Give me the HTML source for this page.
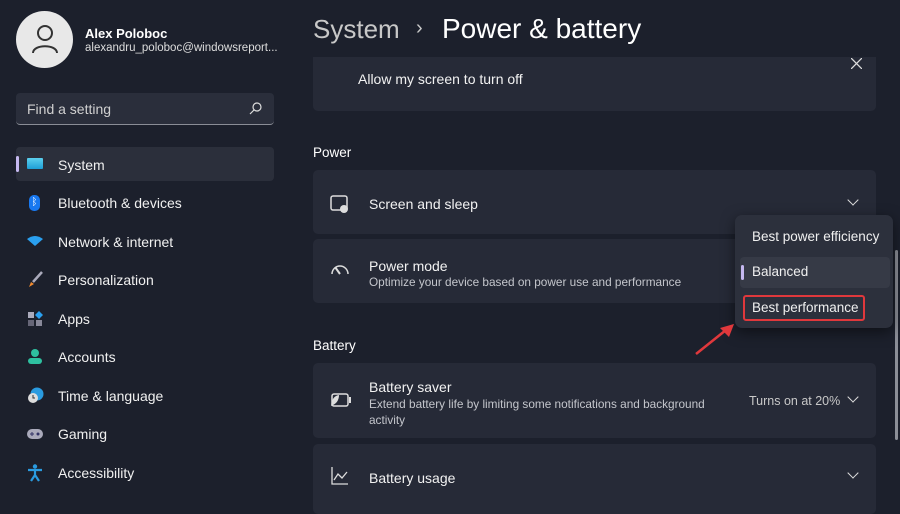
<!DOCTYPE html>
<html><head><meta charset="utf-8"><style>
*{margin:0;padding:0;box-sizing:border-box}
body{width:900px;height:500px;overflow:hidden;background:#1c202c;font-family:"Liberation Sans",sans-serif;color:#fff;position:relative}
.a{position:absolute}
.nav{position:absolute;left:58px;font-size:14px;color:#f0f0f0}
.ic{position:absolute;left:27px}
.card{position:absolute;left:313px;width:563px;background:#262a37;border-radius:5px}
.t{font-size:14px;color:#f2f2f2;position:absolute}
.s{font-size:11.8px;color:#c4c6cc;position:absolute}
.chev{position:absolute;width:8px;height:8px;border-right:1.3px solid #ddd;border-bottom:1.3px solid #ddd;transform:rotate(45deg)}
</style></head><body>
<div class="a" style="left:16px;top:11px;width:57px;height:57px;border-radius:50%;background:#e8e8e8"></div>
<svg class="a" style="left:30px;top:23px" width="30" height="32" viewBox="0 0 30 32"><circle cx="15" cy="10" r="7" fill="none" stroke="#333" stroke-width="2"/><path d="M3 30 C3 21 27 21 27 30" fill="none" stroke="#333" stroke-width="2"/></svg>
<div class="a" style="left:85px;top:26px;font-size:13px;font-weight:bold">Alex Poloboc</div>
<div class="a" style="left:85px;top:42px;font-size:11.5px;color:#ddd">alexandru_poloboc@windowsreport...</div>
<div class="a" style="left:16px;top:93px;width:258px;height:32px;background:#2a2e3b;border-radius:4px;border-bottom:1px solid #8a8d96"></div>
<div class="a" style="left:27px;top:101px;font-size:14px;color:#d0d0d0">Find a setting</div>
<svg class="a" style="left:249px;top:102px" width="13" height="13" viewBox="0 0 13 13"><circle cx="8" cy="5" r="4" fill="none" stroke="#ddd" stroke-width="1.2"/><path d="M5 8 L1 12" stroke="#ddd" stroke-width="1.2"/></svg>
<div class="a" style="left:16px;top:147px;width:258px;height:34px;background:#2b2f3b;border-radius:4px"></div>
<div class="a" style="left:16px;top:156px;width:3px;height:16px;background:#c5b8f0;border-radius:2px"></div>
<div class="ic" style="top:158px;width:16px;height:11px;background:linear-gradient(#5cd0ee,#1e9fd6);border-radius:1px"></div>
<div class="nav" style="top:157px">System</div>
<div class="ic" style="top:195px;left:29px;width:11px;height:16px;background:#1878f0;border-radius:5px;font-size:10px;text-align:center;line-height:16px">ᛒ</div>
<div class="nav" style="top:195px">Bluetooth &amp; devices</div>
<svg class="ic" style="top:236px" width="16" height="10" viewBox="0 0 16 10"><path d="M0 3 Q8 -3 16 3 L8 10Z" fill="#2aa0f0"/></svg>
<div class="nav" style="top:234px">Network &amp; internet</div>
<svg class="ic" style="top:271px" width="16" height="17" viewBox="0 0 16 17"><path d="M15 1 L6 11" stroke="#aab" stroke-width="2.5"/><path d="M2 16 L4 11 L7 13Z" fill="#f08a30"/></svg>
<div class="nav" style="top:272px">Personalization</div>
<svg class="ic" style="top:311px" width="16" height="16" viewBox="0 0 16 16"><rect x="1" y="1" width="6" height="6" fill="#aab"/><rect x="1" y="9" width="6" height="6" fill="#667"/><rect x="9" y="9" width="6" height="6" fill="#889"/><path d="M12 0 L16 4 L12 8 L8 4Z" fill="#2aa0f0"/></svg>
<div class="nav" style="top:311px">Apps</div>
<svg class="ic" style="top:348px" width="16" height="17" viewBox="0 0 16 17"><circle cx="8" cy="5" r="4" fill="#2ec0a0"/><rect x="1" y="10" width="14" height="6" rx="3" fill="#2ec0a0"/></svg>
<div class="nav" style="top:349px">Accounts</div>
<svg class="ic" style="top:387px" width="17" height="17" viewBox="0 0 17 17"><circle cx="10" cy="7" r="6.5" fill="#2a9be0"/><circle cx="6" cy="11" r="5" fill="#ddd"/><path d="M6 8 V11 H8" stroke="#333" fill="none"/></svg>
<div class="nav" style="top:388px">Time &amp; language</div>
<svg class="ic" style="top:429px" width="16" height="10" viewBox="0 0 16 10"><rect x="0" y="0" width="16" height="10" rx="5" fill="#aab"/><circle cx="11" cy="5" r="1.5" fill="#336"/><path d="M3 5 H7 M5 3 V7" stroke="#336"/></svg>
<div class="nav" style="top:426px">Gaming</div>
<svg class="ic" style="top:464px" width="16" height="18" viewBox="0 0 16 18"><circle cx="8" cy="2.5" r="2.2" fill="#2a9be0"/><path d="M1 6 L15 6 M8 6 V11 L4 17 M8 11 L12 17" stroke="#2a9be0" stroke-width="2.2" fill="none"/></svg>
<div class="nav" style="top:465px">Accessibility</div>
<div class="a" style="left:313px;top:14px;font-size:26px;color:#c8c8c8">System</div>
<div class="a" style="left:416px;top:17px;font-size:20px;color:#c8c8c8">›</div>
<div class="a" style="left:442px;top:13px;font-size:28px;color:#fff">Power &amp; battery</div>
<div class="card" style="top:57px;height:54px;border-radius:0 0 5px 5px"></div>
<div class="t" style="left:358px;top:71px">Allow my screen to turn off</div>
<svg class="a" style="left:851px;top:58px" width="11" height="11" viewBox="0 0 11 11"><path d="M0 0 L11 11 M11 0 L0 11" stroke="#ddd" stroke-width="1.3"/></svg>
<div class="a" style="left:313px;top:145px;font-size:13.5px">Power</div>
<div class="card" style="top:170px;height:64px"></div>
<svg class="a" style="left:330px;top:195px" width="19" height="18" viewBox="0 0 19 18"><rect x="1" y="1" width="16" height="14" rx="2" fill="none" stroke="#ddd" stroke-width="1.5"/><circle cx="14" cy="14" r="4" fill="#ddd"/></svg>
<div class="t" style="left:369px;top:196px">Screen and sleep</div>
<div class="chev" style="left:849px;top:196px"></div>
<div class="card" style="top:239px;height:64px"></div>
<svg class="a" style="left:330px;top:262px" width="20" height="16" viewBox="0 0 20 16"><path d="M2 12 A8 8 0 0 1 18 12" fill="none" stroke="#ddd" stroke-width="1.5"/><path d="M10 12 L5 5" stroke="#ddd" stroke-width="2"/></svg>
<div class="t" style="left:369px;top:258px">Power mode</div>
<div class="s" style="left:369px;top:275px">Optimize your device based on power use and performance</div>
<div class="a" style="left:313px;top:338px;font-size:13.5px">Battery</div>
<div class="card" style="top:363px;height:75px"></div>
<svg class="a" style="left:330px;top:393px" width="22" height="14" viewBox="0 0 22 14"><rect x="2" y="1" width="16" height="12" rx="2" fill="none" stroke="#ddd" stroke-width="1.5"/><rect x="19" y="4" width="2" height="6" fill="#ddd"/><path d="M1 13 Q2 3 9 2 Q9 10 1 13Z" fill="#ddd"/></svg>
<div class="t" style="left:369px;top:379px">Battery saver</div>
<div class="s" style="left:369px;top:396px;width:360px;line-height:16px">Extend battery life by limiting some notifications and background activity</div>
<div class="a" style="left:749px;top:394px;font-size:12.5px;color:#c8c8c8">Turns on at 20%</div>
<div class="chev" style="left:849px;top:393px"></div>
<div class="card" style="top:444px;height:70px"></div>
<svg class="a" style="left:331px;top:467px" width="18" height="18" viewBox="0 0 18 18"><path d="M1 0 V17 H17 M3 13 L7 7 L11 11 L16 5" fill="none" stroke="#ddd" stroke-width="1.3"/></svg>
<div class="t" style="left:369px;top:470px">Battery usage</div>
<div class="chev" style="left:849px;top:469px"></div>
<div class="a" style="left:895px;top:250px;width:3px;height:190px;background:#8c8f98;border-radius:2px"></div>
<div class="a" style="left:735px;top:215px;width:158px;height:113px;background:#2c303c;border-radius:7px;box-shadow:0 4px 14px rgba(0,0,0,.5)"></div>
<div class="a" style="left:752px;top:229px;font-size:13.5px;color:#f0f0f0">Best power efficiency</div>
<div class="a" style="left:740px;top:257px;width:150px;height:31px;background:#363a46;border-radius:4px"></div>
<div class="a" style="left:741px;top:265px;width:3px;height:15px;background:#c5b8f0;border-radius:2px"></div>
<div class="a" style="left:752px;top:264px;font-size:13.5px;color:#f0f0f0">Balanced</div>
<div class="a" style="left:743px;top:295px;width:122px;height:26px;border:2px solid #e0383c;border-radius:3px"></div>
<div class="a" style="left:752px;top:300px;font-size:13.5px;color:#f0f0f0">Best performance</div>
<svg class="a" style="left:692px;top:320px" width="45" height="38" viewBox="0 0 45 38"><path d="M4 34 L34 10" stroke="#e0383c" stroke-width="2.5"/><path d="M42 4 L28 8 L37 17Z" fill="#e0383c"/></svg>
</body></html>
